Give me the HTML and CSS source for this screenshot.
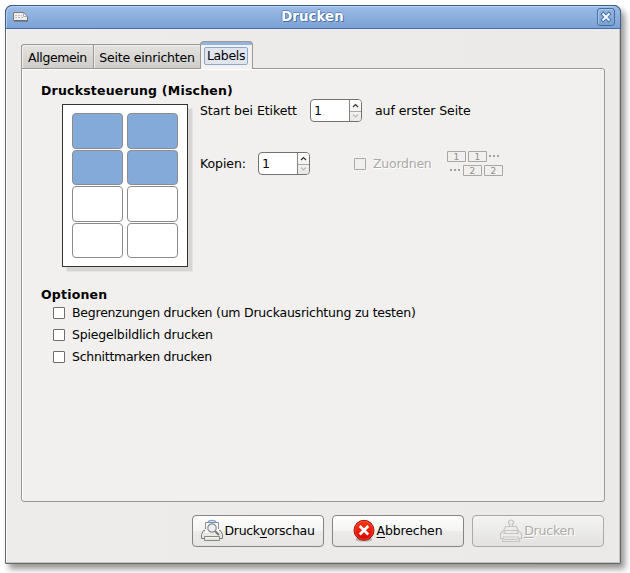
FILE: index.html
```html
<!DOCTYPE html>
<html lang="de">
<head>
<meta charset="utf-8">
<title>Drucken</title>
<link rel="stylesheet" href="styles.css">
</head>
<body>
<div class="window">
  <header class="titlebar">
    <svg class="app-icon" width="15" height="10" viewBox="0 0 15 10">
      <path d="M.5.5h10l4 4v4h-14z" fill="#eeeeea" stroke="#777b7e"/>
      <path d="M2 3.5h7M2 5.5h8" stroke="#bbb" stroke-dasharray="2 1"/>
      <path d="M10.5 1v3.5h3.5" fill="#fff" stroke="#aaa"/>
      <path d="M1 9h14V5" fill="none" stroke="#56616d"/>
    </svg>
    <h1>Drucken</h1>
    <button class="close" aria-label="Schließen">
      <svg width="12" height="12" viewBox="0 0 12 12">
        <path d="M3.200 3.200l5.600 5.600M8.800 3.200l-5.600 5.600" stroke="#4a74a8" stroke-width="4" stroke-linecap="square"/>
        <path d="M3.200 3.200l5.600 5.600M8.800 3.200l-5.600 5.600" stroke="#f4f8fc" stroke-width="2" stroke-linecap="square"/>
      </svg>
    </button>
  </header>
  <nav class="tabs">
    <div class="tab first">Allgemein</div>
    <div class="tab second">Seite einrichten</div>
    <div class="tab active"><span>Labels</span></div>
  </nav>
  <main class="panel">
    <h2>Drucksteuerung (Mischen)</h2>
    <section class="control">
      <div class="sheet">
        <i class="used"></i><i class="used"></i>
        <i class="used"></i><i class="used"></i>
        <i></i><i></i>
        <i></i><i></i>
      </div>
      <div class="fields">
        <div class="row">
          <span class="start">Start bei Etikett</span>
          <div class="spin"><span>1</span><div class="arrows">
            <svg width="11" height="21" viewBox="0 0 11 21"><path d="M3 7l2.500-2.500L8 7" fill="none" stroke="#333" stroke-width="1.200"/><path d="M0 11.500h11" stroke="#aaa9a6"/><path d="M3 14.500l2.500 2.500L8 14.500" fill="none" stroke="#bbb" stroke-width="1.200"/></svg>
          </div></div>
          <span class="after">auf erster Seite</span>
        </div>
        <div class="row copies">
          <span class="kopien">Kopien:</span>
          <div class="spin"><span>1</span><div class="arrows">
            <svg width="11" height="21" viewBox="0 0 11 21"><path d="M3 7l2.500-2.500L8 7" fill="none" stroke="#333" stroke-width="1.200"/><path d="M0 11.500h11" stroke="#aaa9a6"/><path d="M3 14.500l2.500 2.500L8 14.500" fill="none" stroke="#bbb" stroke-width="1.200"/></svg>
          </div></div>
          <span class="box disabled"></span>
          <span class="collate">Zuordnen</span>
          <svg class="pages" width="57" height="26" viewBox="0 0 57 26">
            <g fill="none" stroke="#a9a8a5"><path d="M.5.5h18v10H.5zM21.500.5h18v10h-18zM16.500 14.500h18v10h-18zM37.500 14.500h18v10h-18z"/></g>
            <g fill="#8f8e8b"><path opacity=".8" d="M42 4h2v2h-2zM46 4h2v2h-2zM50 4h2v2h-2zM3 18h2v2H3zM7 18h2v2H7zM11 18h2v2h-2z"/>
            <text x="6.500" y="9">1</text><text x="27.500" y="9">1</text><text x="22.500" y="23">2</text><text x="43.500" y="23">2</text></g>
          </svg>
        </div>
      </div>
    </section>
    <h2 class="options-title">Optionen</h2>
    <ul class="options">
      <li><span class="box"></span><span>Begrenzungen drucken (um Druckausrichtung zu testen)</span></li>
      <li><span class="box"></span><span class="mirror">Spiegelbildlich drucken</span></li>
      <li><span class="box"></span><span class="marks">Schnittmarken drucken</span></li>
    </ul>
  </main>
  <footer>
    <button class="action preview">
      <svg class="icon" width="24" height="24" viewBox="0 0 24 24">
        <path d="M5.500 13V3.500h13V13" fill="#fafafa" stroke="#8b8d88"/>
        <path d="M8 3c1-2 7-2 8 0" fill="none" stroke="#78a8e0" stroke-width="1.500"/>
        <path d="M3.500 11.500h17l2 4v4h-21v-4z" fill="#e9e9e6" stroke="#7c7e79"/>
        <path d="M5 10h14v4H5z" fill="#f8f8f7"/>
        <path d="M4.500 17.500h15v4h-15z" fill="#f5f5f3" stroke="#858782"/>
        <path d="M5 20h14" stroke="#d5d4cf"/>
        <path d="M15 12l4 4" stroke="#777974" stroke-width="2"/>
        <circle cx="12" cy="9" r="4.200" fill="#e8eef4" fill-opacity=".8" stroke="#8a8c87" stroke-width="1.200"/>
      </svg><span>Druck<u>v</u>orschau</span>
    </button>
    <button class="action">
      <svg class="icon" width="24" height="24" viewBox="0 0 24 24">
        <defs><linearGradient id="red" x2="0" y2="1"><stop stop-color="#f43b16"/><stop offset=".5" stop-color="#ee1e0c"/><stop offset="1" stop-color="#d40000"/></linearGradient></defs>
        <ellipse cx="12" cy="20.500" rx="8.500" ry="2" fill="#888" opacity=".6"/>
        <circle cx="12" cy="11.300" r="10" fill="url(#red)" stroke="#a90b06"/>
        <circle cx="12" cy="11.300" r="9" fill="none" stroke="#ff6048" stroke-opacity=".55"/>
        <path d="M8.700 8l6.600 6.600M15.300 8l-6.600 6.600" stroke="#fff" stroke-width="2.700" stroke-linecap="square"/>
      </svg><span><u>A</u>bbrechen</span>
    </button>
    <button class="action off" disabled>
      <svg class="icon" width="24" height="24" viewBox="0 0 24 24" fill="#ececea" stroke="#c6c5c2" stroke-width="1.200">
        <path d="M10.500 7.500V5L9.500 4V2.500q2.500-3 5 0V4l-1 1v2.500z"/>
        <path d="M4.500 12l2-4.500h11l2 4.500 3 2.500v5h-21v-5z"/>
        <path d="M6 11.500h12l1 3H5zM4.500 18h15l1 4.500h-17z"/>
        <path d="M5 20.500h14"/>
      </svg><span><u>D</u>rucken</span>
    </button>
  </footer>
</div>
</body>
</html>
```
FILE: styles.css
```css
* { box-sizing: border-box; }
html, body { margin: 0; background: #fff; }
body {
  height: 573px;
  padding: 5px 0 0 5px;
  overflow: hidden;
  font: 12.5px/16px "DejaVu Sans", sans-serif;
  letter-spacing: -.07px;
  color: #000;
}
button { font: inherit; letter-spacing: inherit; color: inherit; padding: 0; }
.window {
  display: flex;
  flex-direction: column;
  width: 616px;
  height: 559px;
  border: 1px solid #666563;
  border-radius: 7px 7px 0 0;
  background: linear-gradient(90deg, #edecea, #ebeae8);
  box-shadow: 4px 5px 6px rgba(0, 0, 0, .42), inset -1px -1px #c7c6c3, inset 1px 0 #fff;
}
.titlebar {
  display: flex;
  align-items: center;
  justify-content: space-between;
  height: 24px;
  margin: -1px -1px 0;
  padding: 0 6px 0 7px;
  border: 1px solid #3e5f88;
  border-bottom-color: #426da8;
  border-radius: 7px 7px 0 0;
  background: linear-gradient(#9dbce6, #7ba2d4);
  box-shadow: inset 1px 1px #b3cdef;
}
h1 {
  margin: 0;
  color: #fff;
  font-size: 13.3px;
  letter-spacing: .1px;
  line-height: 20px;
  text-shadow: 1px 1px #4872a7, -1px 0 #6089bd, 0 -1px #6089bd;
}
.close {
  display: grid;
  place-items: center;
  width: 18px;
  height: 18px;
  margin-right: -1px;
  border: 1px solid #456d9f;
  border-radius: 3px;
  background: linear-gradient(#94b5df, #7ba3d3);
  box-shadow: inset 1px 1px #a9c5e9;
}
.tabs {
  display: flex;
  align-items: flex-end;
  height: 39px;
  margin-left: 15px;
  position: relative;
}
.tab {
  height: 24px;
  padding-top: 5px;
  border: 1px solid #999895;
  border-bottom: 0;
  background: linear-gradient(#e4e3e0, #cfcdca);
  box-shadow: inset 1px 1px #f0efed;
  text-align: center;
  white-space: nowrap;
}
.first { width: 73px; border-radius: 3px 0 0; letter-spacing: -.4px; }
.second { width: 106px; border-left: 0; border-right: 0; letter-spacing: -.2px; }
.active {
  width: 53px;
  height: 28px;
  margin-bottom: -1px;
  padding: 5px 4px 0 3px;
  border-color: #426da8 #999895 0;
  border-radius: 4px 4px 0 0;
  background: linear-gradient(#92b4df 0 3px, #f2f1ef 3px);
  box-shadow: none;
  letter-spacing: -.35px;
}
.active span {
  display: block;
  height: 18px;
  border: 1px solid #8da9cb;
  border-radius: 2px;
  background: #e0e5ef;
  line-height: 16px;
}
.panel {
  width: 584px;
  height: 434px;
  margin-left: 15px;
  padding: 14px 19px;
  border: 1px solid #999895;
  border-radius: 0 3px 3px;
  background: #f1f0ee;
  box-shadow: inset 1px 1px #fff;
}
h2 { margin: 0; font-size: 12.5px; line-height: 16px; height: 16px; letter-spacing: .21px; }
.control { display: flex; height: 188px; padding-left: 21px; }
.sheet {
  display: grid;
  grid-template-columns: 51px 51px;
  grid-auto-rows: 35.500px;
  gap: 1px 4px;
  align-content: start;
  width: 126px;
  height: 163px;
  margin-top: 5px;
  padding: 8px 9px;
  border: 1px solid #333;
  background: #fff;
  box-shadow: 4.500px 4.500px #d6d5d3;
}
.sheet i { border: 1px solid #8c8c8c; border-radius: 4px; background: #fff; }
.sheet .used { background: #84aad9; }
.fields { margin-left: 12px; }
.row { display: flex; align-items: center; height: 24px; }
.copies { margin-top: 29px; }
.start { width: 110px; white-space: nowrap; }
.kopien { width: 58px; }
.spin {
  display: flex;
  width: 52px;
  height: 23px;
  margin-top: -2px;
  border: 1px solid #73726f;
  border-radius: 4px;
  background: #fff;
  overflow: hidden;
}
.spin span { width: 39px; padding-left: 3px; line-height: 22px; }
.arrows { width: 12px; border-left: 1px solid #858480; background: linear-gradient(#fff, #e8e7e5); }
.arrows svg { display: block; }
.after { margin-left: 13px; }
.box {
  flex: none;
  width: 12px;
  height: 12px;
  border: 1px solid #6f6e6b;
  border-radius: 1px;
  background: #fff;
}
.box.disabled { margin-left: 44px; border-color: #a9a8a5; background: #f1f0ee; }
.collate { width: 74px; margin-left: 7px; color: #aaa9a7; text-shadow: 1px 1px #fff; letter-spacing: -.25px; }
.pages { margin-top: 0; }
.pages text { font: 9px "DejaVu Sans", sans-serif; }
.options-title { height: 15px; }
.options { margin: 0; padding: 0 0 0 12px; list-style: none; letter-spacing: -.23px; }
.mirror { letter-spacing: -.18px; }
.marks { letter-spacing: -.27px; }
.options li { display: flex; align-items: center; gap: 7px; height: 22px; white-space: nowrap; }
footer { display: flex; gap: 8px; margin: 13px 0 0 186px; }
.action {
  display: flex;
  align-items: center;
  justify-content: center;
  gap: 1px;
  width: 132px;
  height: 32px;
  padding-right: 2px;
  border: 1px solid #858481;
  border-radius: 4px;
  background: linear-gradient(#fff, #f4f4f3 48%, #ecebea 52%, #e6e5e3);
  letter-spacing: -.18px;
}
.preview { letter-spacing: -.3px; }
.action u { text-underline-offset: 2px; text-decoration-skip-ink: none; }
.icon { flex: none; }
.off { border-color: #aaa9a7; background: linear-gradient(#f3f3f1, #ebebe9 50%, #e2e1df); color: #acaba8; text-shadow: 1px 1px #fff; }
```
